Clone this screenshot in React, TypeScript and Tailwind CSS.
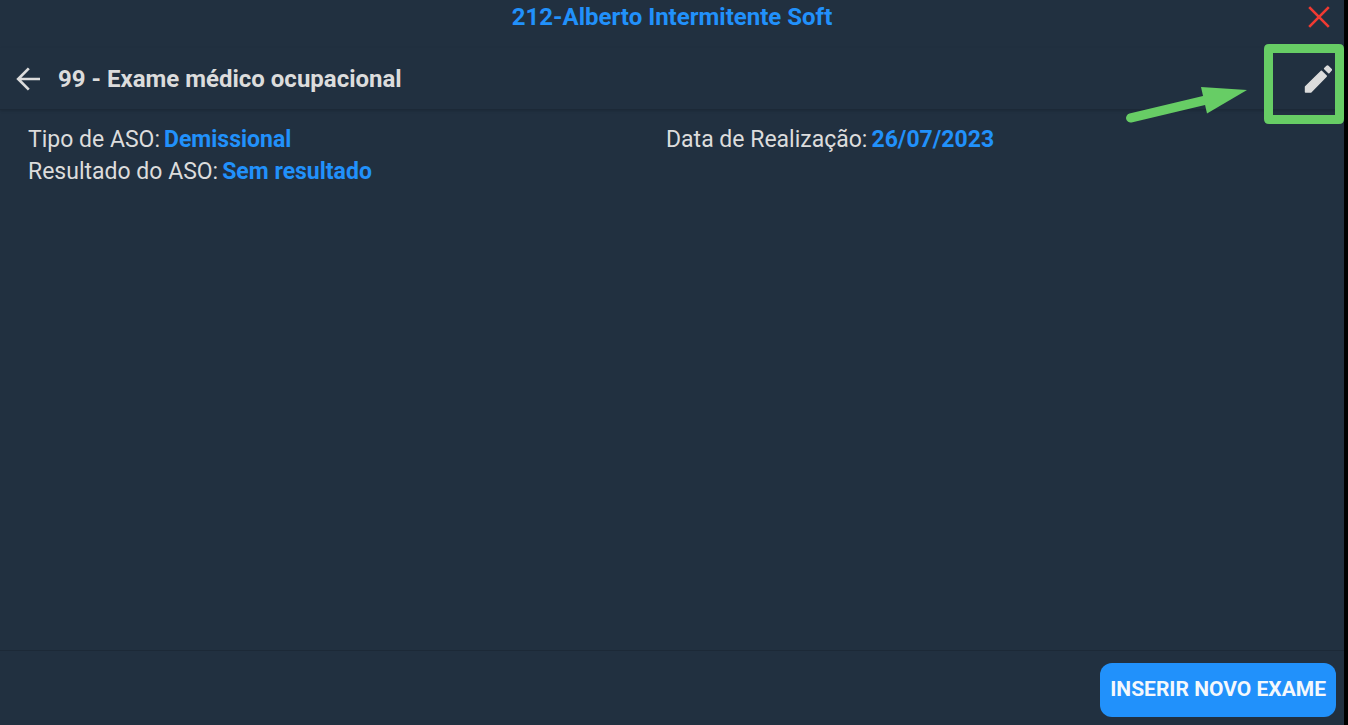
import type { ReactNode } from "react";

interface FieldProps {
  label: string;
  value: string;
}

function Field({ label, value }: FieldProps) {
  return (
    <div className="flex gap-1">
      <dt>{label}</dt>
      <dd className="font-bold text-[#2191fb]">{value}</dd>
    </div>
  );
}

interface IconButtonProps {
  label: string;
  className?: string;
  children: ReactNode;
}

function IconButton({ label, className = "", children }: IconButtonProps) {
  return (
    <button
      type="button"
      aria-label={label}
      className={`flex shrink-0 cursor-pointer items-center justify-center ${className}`}
    >
      {children}
    </button>
  );
}

function BackIcon() {
  return (
    <svg width="24" height="24" viewBox="0 0 24 24" fill="none" stroke="currentColor" strokeWidth="2.7">
      <path d="M12.800 1.400 2.200 12l10.600 10.600M2.200 12H24" />
    </svg>
  );
}

function CloseIcon() {
  return (
    <svg width="22" height="22" viewBox="0 0 22 22" fill="none" stroke="currentColor" strokeWidth="2.6">
      <path d="m1.200 1.200 19.600 19.600M20.800 1.200 1.200 20.800" />
    </svg>
  );
}

function PencilIcon() {
  return (
    <svg
      width="28"
      height="30"
      viewBox="0 0 28 30"
      fill="currentColor"
      stroke="currentColor"
      strokeWidth="1.6"
      strokeLinejoin="round"
    >
      <path d="M1.600 28v-5.200L17.400 7.300l4.800 4.800L6.800 28z" />
      <path d="M20.700 4.600 23 2.300q.5-.5 1 0l3 3q.5.500 0 1L24.800 8.700z" />
    </svg>
  );
}

/* Green frame around the edit button, with the arrow pointing at it */
function EditHighlight() {
  return (
    <svg
      className="pointer-events-none absolute -top-1 right-0"
      width="220"
      height="80"
      viewBox="0 0 220 80"
      fill="none"
      aria-hidden="true"
    >
      <path
        fill="#67cd65"
        fillRule="evenodd"
        d="M145 0h70q5 0 5 5v70q0 5-5 5h-70q-5 0-5-5V5q0-5 5-5zM149 9v62h62V9z"
      />
      <path d="M6.500 74 80 56.500" stroke="#67cd65" strokeWidth="9" strokeLinecap="round" />
      <path d="m77 43 46 3-40 23.500z" fill="#67cd65" />
    </svg>
  );
}

export default function App() {
  return (
    <div className="min-h-screen bg-black pr-1 font-[Roboto,sans-serif]">
      <div className="flex min-h-screen flex-col bg-[#213040] text-[#dcdcdc]">
        <header className="grid h-12 grid-cols-[1fr_auto_1fr] items-start px-3.5">
          <h1 className="col-start-2 text-[24px] leading-[34px] font-bold text-[#2191fb]">
            212-Alberto Intermitente Soft
          </h1>
          <IconButton label="Fechar" className="h-[34px] justify-self-end text-[#f03a32]">
            <CloseIcon />
          </IconButton>
        </header>

        <div className="relative flex h-[62px] items-center border-b border-[#1c2937] pr-3 pl-4 shadow-sm">
          <IconButton label="Voltar">
            <BackIcon />
          </IconButton>
          <h2 className="ml-4.5 flex-1 text-[24px] leading-[32px] font-bold">
            99 - Exame médico ocupacional
          </h2>
          <IconButton label="Editar">
            <PencilIcon />
          </IconButton>
          <EditHighlight />
        </div>

        <main className="flex-1 pt-3.5 pr-10 pl-7">
          <dl className="grid grid-cols-2 text-[23px] leading-[32px]">
            <Field label="Tipo de ASO:" value="Demissional" />
            <Field label="Data de Realização:" value="26/07/2023" />
            <Field label="Resultado do ASO:" value="Sem resultado" />
          </dl>
        </main>

        <footer className="flex justify-end border-t border-[#1c2937] px-2 pt-3 pb-2">
          <button
            type="button"
            className="h-[54px] cursor-pointer rounded-xl bg-[#2191fb] px-2.5 text-[21px] font-bold text-[#f4f8fc]"
          >
            INSERIR NOVO EXAME
          </button>
        </footer>
      </div>
    </div>
  );
}
